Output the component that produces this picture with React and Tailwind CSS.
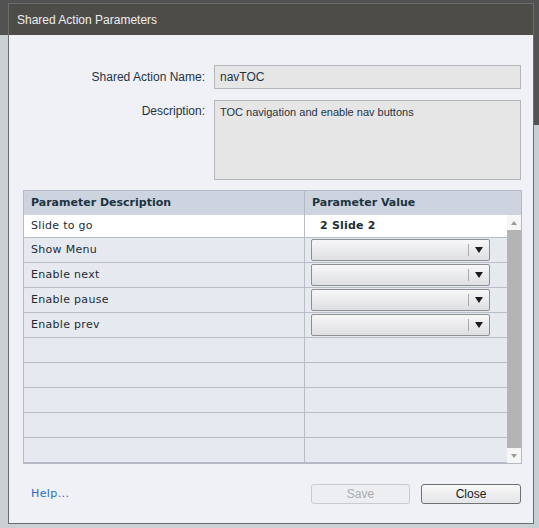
import React from "react";

const rows = [
  { name: "Slide to go", value: "2 Slide 2", kind: "text" },
  { name: "Show Menu", kind: "select" },
  { name: "Enable next", kind: "select" },
  { name: "Enable pause", kind: "select" },
  { name: "Enable prev", kind: "select" },
  { name: "", kind: "empty" },
  { name: "", kind: "empty" },
  { name: "", kind: "empty" },
  { name: "", kind: "empty" },
  { name: "", kind: "empty" },
];

const uiFont = { fontFamily: '"Liberation Sans", Arial, sans-serif' };
const gridFont = { fontFamily: '"DejaVu Sans", Verdana, sans-serif' };

function Dropdown() {
  return (
    <div className="ml-[6px] flex h-[22px] w-[179px] items-center rounded-[2px] border border-[#8c8f94] bg-gradient-to-b from-[#f7f7f8] to-[#dedfe2]">
      <div className="flex-1" />
      <div className="h-[12px] w-px bg-[#a9abaf]" />
      <div className="flex w-[20px] justify-center">
        <svg width="8" height="6" viewBox="0 0 8 6">
          <path d="M0 0h8L4 6z" fill="#1d1d1d" />
        </svg>
      </div>
    </div>
  );
}

function Row({ row, first }) {
  return (
    <div
      className={`flex border-b border-[#b9bdc5] ${first ? "h-[23px] bg-white" : "h-[25px] bg-[#e6e9f0]"}`}
    >
      <div className="flex w-[281px] items-center border-r border-[#b9bdc5] pl-[7px] text-[11px] tracking-[0.3px] text-[#1c2c36]" style={gridFont}>
        {row.name}
      </div>
      <div className="flex flex-1 items-center">
        {row.kind === "text" && (
          <span className="pl-[15px] text-[11px] font-bold tracking-[0.2px] text-[#1c2c36]" style={gridFont}>
            {row.value}
          </span>
        )}
        {row.kind === "select" && <Dropdown />}
      </div>
    </div>
  );
}

export default function App() {
  return (
    <div className="relative h-[528px] w-[539px] overflow-hidden bg-[linear-gradient(to_bottom,#525252_0,#525252_35px,#cbd0d3_35px)] pt-[3px] pl-[8px]">
      <div className="absolute right-0 top-0 h-[125px] w-[6px] bg-[#525252]" />
      <div className="absolute right-0 top-[125px] h-[403px] w-[6px] bg-[#c5d0d4]" />
      <div className="relative flex h-[521px] w-[526px] flex-col border border-[#6d6d6d] bg-[#eff1f6]" style={uiFont}>
        <div className="flex h-[31px] items-center bg-[#4d4c49] pl-[8px] text-[12px] text-[#eeeeee]">
          Shared Action Parameters
        </div>

        <div className="flex flex-col gap-[11px] pl-[14px] pr-[12px] pt-[30px]">
          <div className="flex items-center gap-[9px]">
            <div className="w-[182px] text-right text-[12px] text-[#1e3444]">Shared Action Name:</div>
            <div className="flex h-[24px] flex-1 items-center border border-[#b5b7ba] bg-[#e6e6e6] pl-[5px] text-[12px] text-[#1e3444]">
              navTOC
            </div>
          </div>
          <div className="flex items-start gap-[9px]">
            <div className="w-[182px] pt-[2px] text-right text-[12px] text-[#1e3444]">Description:</div>
            <div className="h-[80px] flex-1 border border-[#b5b7ba] bg-[#e6e6e6] pl-[5px] pt-[3px] text-[11px] text-[#1e3444]">
              TOC navigation and enable nav buttons
            </div>
          </div>
        </div>

        <div className="ml-[14px] mt-[10px] w-[499px] border border-[#b4bac5]">
          <div className="flex h-[24px] bg-[#cdd4df] text-[11px] font-bold text-[#1c3340]" style={gridFont}>
            <div className="flex w-[281px] items-center border-r border-[#b4bac5] pl-[7px]">Parameter Description</div>
            <div className="flex items-center pl-[7px]">Parameter Value</div>
          </div>
          <div className="flex">
            <div className="flex-1">
              {rows.map((r, i) => (
                <Row key={i} row={r} first={i === 0} />
              ))}
            </div>
            <div className="flex w-[14px] flex-col bg-[#b4b4b4]">
              <div className="flex h-[15px] items-center justify-center bg-[#f6f6f6]">
                <svg width="6" height="4" viewBox="0 0 6 4">
                  <path d="M3 0l3 4H0z" fill="#9a9a9a" />
                </svg>
              </div>
              <div className="flex-1" />
              <div className="flex h-[15px] items-center justify-center bg-[#f6f6f6]">
                <svg width="6" height="4" viewBox="0 0 6 4">
                  <path d="M0 0h6L3 4z" fill="#9a9a9a" />
                </svg>
              </div>
            </div>
          </div>
        </div>

        <div className="mt-[20px] flex items-center pl-[22px] pr-[12px]">
          <a className="text-[11px] tracking-[0.4px] text-[#2a6bc4]" style={gridFont}>Help...</a>
          <div className="flex-1" />
          <button className="h-[20px] w-[99px] rounded-[3px] border border-[#c9cbcf] bg-[#eceef2] text-[12px] text-[#a9abaf]">
            Save
          </button>
          <button className="ml-[11px] h-[20px] w-[100px] rounded-[3px] border border-[#6f7175] bg-gradient-to-b from-[#f8f8f8] to-[#e4e5e8] text-[12px] text-[#1a1a1a]">
            Close
          </button>
        </div>
      </div>
    </div>
  );
}
